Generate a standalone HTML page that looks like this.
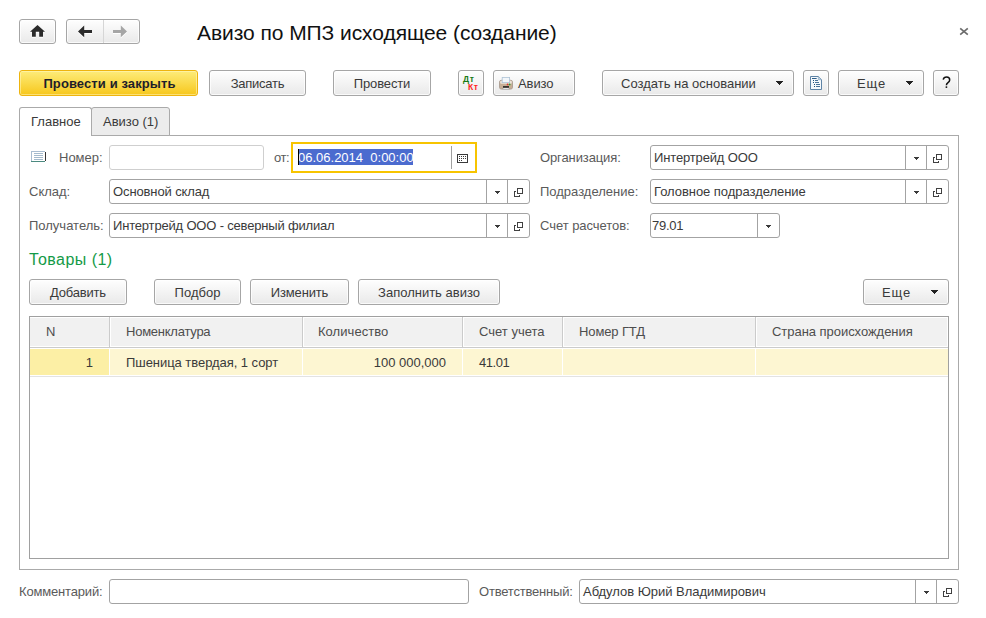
<!DOCTYPE html>
<html><head><meta charset="utf-8">
<style>
*{box-sizing:border-box;margin:0;padding:0}
html,body{width:986px;height:618px;overflow:hidden;background:#fff}
body{position:relative;font-family:"Liberation Sans",sans-serif;font-size:13px;color:#333}
.a{position:absolute;white-space:nowrap}
.btn{position:absolute;border:1px solid #a6a6a6;border-radius:3px;background:linear-gradient(#fefefe,#e9e9e9);box-shadow:inset 0 0 0 1px rgba(255,255,255,0.75)}
.t{position:absolute;white-space:pre;line-height:15px;color:#3a3a3a}
.lbl{position:absolute;white-space:pre;line-height:15px;color:#5a5a5a}
.inp{position:absolute;height:25px;border:1px solid #a3a3a3;border-radius:3px;background:#fff}
.sep{position:absolute;top:0;bottom:0;width:1px;background:#a3a3a3}
.col{position:absolute;top:0;width:1px}
</style></head><body>
<div class="btn" style="left:19px;top:19px;width:37px;height:25px;"></div>
<svg class="a" style="left:30px;top:24px;filter:drop-shadow(0 1px 0 #fff)" width="16" height="14" viewBox="0 0 16 14"><path d="M7.5 1 L15 7.7 H13 V12.7 H9.2 V7.7 H5.8 V12.7 H2 V7.7 H0 Z" fill="#2b2b2b"/></svg>
<div class="btn" style="left:66px;top:19px;width:74px;height:25px;"></div>
<div class="a" style="left:103px;top:20px;width:1px;height:23px;background:#d6d6d6"></div>
<svg class="a" style="left:78px;top:25px;filter:drop-shadow(0 1px 0 #fff)" width="15" height="13" viewBox="0 0 15 13"><path d="M0 6.4 L6.2 0.6 V4.9 H14 V7.9 H6.2 V12.2 Z" fill="#2b2b2b"/></svg>
<svg class="a" style="left:113px;top:25px;filter:drop-shadow(0 1px 0 #fff)" width="15" height="13" viewBox="0 0 15 13"><path d="M14 6.4 L7.8 0.6 V4.9 H0 V7.9 H7.8 V12.2 Z" fill="#a6a6a6"/></svg>
<div class="a" style="left:197px;top:21px;letter-spacing:-0.06px;font-size:21px;line-height:24px;color:#111">Авизо по МПЗ исходящее (создание)</div>
<svg class="a" style="left:959px;top:27px" width="10" height="9" viewBox="0 0 10 9"><path d="M1.2 1.4 L8.8 7.6 M8.8 1.4 L1.2 7.6" stroke="#6b6b6b" stroke-width="1.7"/></svg>
<div class="btn" style="left:19px;top:70px;width:179px;height:26px;background:linear-gradient(#fdec7a,#f7c71c);border-color:#eeb40e;box-shadow:inset 0 0 0 1px rgba(255,250,200,0.5)"></div>
<div class="t" style="left:20px;top:76px;width:179px;text-align:center;letter-spacing:0.1px;font-weight:bold;color:#1e1e2a">Провести и закрыть</div>
<div class="btn" style="left:209px;top:70px;width:97px;height:26px;"></div>
<div class="t" style="left:209px;top:76px;width:97px;text-align:center;letter-spacing:-0.24px;">Записать</div>
<div class="btn" style="left:333px;top:70px;width:98px;height:26px;"></div>
<div class="t" style="left:333px;top:76px;width:98px;text-align:center;letter-spacing:-0.13px;">Провести</div>
<div class="btn" style="left:458px;top:70px;width:26px;height:26px;"></div>
<div class="a" style="left:463px;top:75px;font-size:8.5px;line-height:9px;font-weight:bold;letter-spacing:0.6px;color:#177a12">Дт</div>
<div class="a" style="left:468px;top:83px;font-size:8.5px;line-height:9px;font-weight:bold;letter-spacing:0.6px;color:#ff2222">Кт</div>
<div class="btn" style="left:493px;top:70px;width:82px;height:26px;"></div>
<svg class="a" style="left:499px;top:77px" width="14" height="13" viewBox="0 0 14 13">
  <rect x="0.5" y="3.3" width="13" height="8.8" rx="1.8" fill="#c6ae96" stroke="#a3968a" stroke-width="0.8"/>
  <rect x="1.2" y="3.8" width="11.6" height="3" rx="1" fill="#ece3da"/>
  <rect x="3.2" y="0.4" width="7.4" height="5.2" fill="#f2f6fa" stroke="#aec3d6" stroke-width="0.8"/>
  <circle cx="8.6" cy="7.4" r="0.9" fill="#e5322c"/>
  <circle cx="10.6" cy="7.4" r="0.9" fill="#2aa02a"/>
  <rect x="4" y="9.2" width="6" height="1.6" fill="#151515"/>
  <rect x="4" y="11" width="6" height="1.4" fill="#fff" stroke="#999" stroke-width="0.5"/>
</svg>
<div class="t" style="left:518px;top:76px;letter-spacing:-0.1px;">Авизо</div>
<div class="btn" style="left:602px;top:70px;width:192px;height:26px;"></div>
<div class="t" style="left:621px;top:76px;">Создать на основании</div>
<svg class="a" style="left:776px;top:81px;filter:drop-shadow(0 0 0.6px #fff)" width="7" height="4" shape-rendering="crispEdges"><path d="M0 0h7v1h-7zM1 1h5v1h-5zM2 2h3v1h-3zM3 3h1v1h-1z" fill="#222"/></svg>
<div class="btn" style="left:803px;top:70px;width:26px;height:26px;"></div>
<svg class="a" style="left:810px;top:76px" width="12" height="14" viewBox="0 0 12 14">
  <path d="M0.5 0.5 H8.3 L11.5 3.7 V13.5 H0.5 Z" fill="#f6f9fc" stroke="#5f84a6"/>
  <path d="M8.3 0.5 V3.7 H11.5 Z" fill="#c5d6e5" stroke="#7f9fbb" stroke-width="0.6"/>
  <path d="M2 2.5 H6.7" stroke="#2f5f8a" stroke-width="1"/>
  <path d="M3 4.5 H4 M3 6.5 H4 M4 8.5 H5 M4 10.5 H5" stroke="#1f4f7a" stroke-width="1"/>
  <path d="M5 4.5 H8 M5 6.5 H9 M6 8.5 H10 M6 10.5 H10" stroke="#4a7399" stroke-width="1"/>
</svg>
<div class="btn" style="left:838px;top:70px;width:86px;height:26px;"></div>
<div class="t" style="left:857px;top:76px;letter-spacing:0.9px;">Еще</div>
<svg class="a" style="left:906px;top:81px;filter:drop-shadow(0 0 0.6px #fff)" width="7" height="4" shape-rendering="crispEdges"><path d="M0 0h7v1h-7zM1 1h5v1h-5zM2 2h3v1h-3zM3 3h1v1h-1z" fill="#222"/></svg>
<div class="btn" style="left:933px;top:70px;width:26px;height:26px;"></div>
<svg class="a" style="left:941px;top:76px" width="11" height="13" viewBox="0 0 11 13"><path d="M2.2 3.7 Q2.8 1.1 5.6 1.1 Q8.7 1.1 8.7 3.9 Q8.7 5.4 7 6.6 Q5.4 7.8 5.4 9.3" fill="none" stroke="#111" stroke-width="1.5"/><circle cx="5.4" cy="11.1" r="0.95" fill="#111"/></svg>
<div class="a" style="left:19px;top:135px;width:940px;height:435px;border:1px solid #aaa"></div>
<div class="a" style="left:91px;top:107px;width:79px;height:29px;border:1px solid #aaa;border-radius:3px 3px 0 0;background:#ececec"></div>
<div class="a" style="left:19px;top:107px;width:73px;height:29px;border:1px solid #aaa;border-bottom:none;border-radius:3px 3px 0 0;background:#fff"></div>
<div class="t" style="left:31px;top:114px;">Главное</div>
<div class="t" style="left:103px;top:114px;">Авизо (1)</div>
<svg class="a" style="left:31px;top:151px" width="15" height="11" shape-rendering="crispEdges">
  <rect x="0" y="0" width="15" height="11" fill="#fff"/>
  <rect x="0" y="0" width="14" height="1" fill="#a9bdd1"/><rect x="0" y="0" width="1" height="10" fill="#a9bdd1"/>
  <rect x="14" y="1" width="1" height="9" fill="#333"/><rect x="0" y="10" width="14" height="1" fill="#4b8a80"/>
  <rect x="3" y="2" width="9" height="1" fill="#a4bacd"/><rect x="3" y="4" width="9" height="1" fill="#a4bacd"/>
  <rect x="3" y="6" width="9" height="1" fill="#a4bacd"/><rect x="3" y="8" width="9" height="1" fill="#a4bacd"/>
</svg>
<div class="lbl" style="left:59px;top:150px;">Номер:</div>
<div class="inp" style="left:109px;top:145px;width:155px;border-color:#cfcfcf"></div>
<div class="lbl" style="left:274px;top:150px;letter-spacing:-0.4px;">от:</div>
<div class="a" style="left:291px;top:142px;width:186px;height:31px;border:2px solid #f7c400;background:#fff"></div>
<div class="a" style="left:298px;top:149px;width:115px;height:16px;background:#4b6bcf"></div>
<div class="t" style="left:298px;top:150px;color:#fff">06.06.2014  0:00:00</div>
<div class="a" style="left:298px;top:149px;width:1px;height:16px;background:#000"></div>
<div class="a" style="left:451px;top:146px;width:1px;height:23px;background:#a0a0a0"></div>
<svg class="a" style="left:457px;top:154px" width="11" height="9" shape-rendering="crispEdges"><path d="M0.5 0.5h10v8h-10z" fill="none" stroke="#3a3a3a"/><path d="M2 2h1v1h-1zM4 2h1v1h-1zM6 2h1v1h-1zM8 2h1v1h-1zM2 4h1v1h-1zM4 4h1v1h-1zM6 4h1v1h-1zM8 4h1v1h-1zM2 6h1v1h-1zM4 6h1v1h-1z" fill="#3a3a3a"/></svg>
<div class="lbl" style="left:540px;top:150px;letter-spacing:-0.11px;">Организация:</div>
<div class="inp" style="left:650px;top:145px;width:299px;border-color:#a3a3a3"><div class="t" style="left:3px;top:4px;letter-spacing:-0.15px;">Интертрейд ООО</div><div class="sep" style="left:254px"></div><div class="sep" style="left:275px"></div><svg class="a" style="left:263px;top:11px" width="5" height="3" shape-rendering="crispEdges"><path d="M0 0h5v1h-5zM1 1h3v1h-3zM2 2h1v1h-1z" fill="#3a3a3a"/></svg><svg class="a" style="left:282px;top:8px" width="10" height="10" shape-rendering="crispEdges"><path d="M3.5 0.5h5v5h-5z" fill="none" stroke="#404040"/><path d="M2 3.5H0.5V8.5H5.5V7" fill="none" stroke="#404040"/></svg></div>
<div class="lbl" style="left:29px;top:184px;">Склад:</div>
<div class="inp" style="left:109px;top:179px;width:421px;border-color:#a3a3a3"><div class="t" style="left:3px;top:4px;letter-spacing:-0.115px;">Основной склад</div><div class="sep" style="left:376px"></div><div class="sep" style="left:397px"></div><svg class="a" style="left:385px;top:11px" width="5" height="3" shape-rendering="crispEdges"><path d="M0 0h5v1h-5zM1 1h3v1h-3zM2 2h1v1h-1z" fill="#3a3a3a"/></svg><svg class="a" style="left:404px;top:8px" width="10" height="10" shape-rendering="crispEdges"><path d="M3.5 0.5h5v5h-5z" fill="none" stroke="#404040"/><path d="M2 3.5H0.5V8.5H5.5V7" fill="none" stroke="#404040"/></svg></div>
<div class="lbl" style="left:540px;top:184px;">Подразделение:</div>
<div class="inp" style="left:650px;top:179px;width:299px;border-color:#a3a3a3"><div class="t" style="left:3px;top:4px;letter-spacing:-0.04px;">Головное подразделение</div><div class="sep" style="left:254px"></div><div class="sep" style="left:275px"></div><svg class="a" style="left:263px;top:11px" width="5" height="3" shape-rendering="crispEdges"><path d="M0 0h5v1h-5zM1 1h3v1h-3zM2 2h1v1h-1z" fill="#3a3a3a"/></svg><svg class="a" style="left:282px;top:8px" width="10" height="10" shape-rendering="crispEdges"><path d="M3.5 0.5h5v5h-5z" fill="none" stroke="#404040"/><path d="M2 3.5H0.5V8.5H5.5V7" fill="none" stroke="#404040"/></svg></div>
<div class="lbl" style="left:29px;top:218px;">Получатель:</div>
<div class="inp" style="left:109px;top:213px;width:421px;border-color:#a3a3a3"><div class="t" style="left:3px;top:4px;letter-spacing:-0.18px;">Интертрейд ООО - северный филиал</div><div class="sep" style="left:376px"></div><div class="sep" style="left:397px"></div><svg class="a" style="left:385px;top:11px" width="5" height="3" shape-rendering="crispEdges"><path d="M0 0h5v1h-5zM1 1h3v1h-3zM2 2h1v1h-1z" fill="#3a3a3a"/></svg><svg class="a" style="left:404px;top:8px" width="10" height="10" shape-rendering="crispEdges"><path d="M3.5 0.5h5v5h-5z" fill="none" stroke="#404040"/><path d="M2 3.5H0.5V8.5H5.5V7" fill="none" stroke="#404040"/></svg></div>
<div class="lbl" style="left:540px;top:218px;letter-spacing:-0.05px;">Счет расчетов:</div>
<div class="inp" style="left:650px;top:213px;width:130px;border-color:#a3a3a3"><div class="t" style="left:1px;top:4px;letter-spacing:-0.27px;">79.01</div><div class="sep" style="left:106px"></div><svg class="a" style="left:115px;top:11px" width="5" height="3" shape-rendering="crispEdges"><path d="M0 0h5v1h-5zM1 1h3v1h-3zM2 2h1v1h-1z" fill="#3a3a3a"/></svg></div>
<div class="a" style="left:29px;top:251px;font-size:16px;line-height:18px;letter-spacing:0.45px;color:#139a47">Товары (1)</div>
<div class="btn" style="left:29px;top:279px;width:98px;height:26px;"></div>
<div class="t" style="left:29px;top:285px;width:98px;text-align:center;letter-spacing:-0.2px;">Добавить</div>
<div class="btn" style="left:154px;top:279px;width:87px;height:26px;"></div>
<div class="t" style="left:154px;top:285px;width:87px;text-align:center;">Подбор</div>
<div class="btn" style="left:250px;top:279px;width:99px;height:26px;"></div>
<div class="t" style="left:250px;top:285px;width:99px;text-align:center;letter-spacing:-0.16px;">Изменить</div>
<div class="btn" style="left:358px;top:279px;width:142px;height:26px;"></div>
<div class="t" style="left:358px;top:285px;width:142px;text-align:center;">Заполнить авизо</div>
<div class="btn" style="left:863px;top:279px;width:86px;height:26px;"></div>
<div class="t" style="left:882px;top:285px;letter-spacing:0.9px;">Еще</div>
<svg class="a" style="left:931px;top:290px;filter:drop-shadow(0 0 0.6px #fff)" width="7" height="4" shape-rendering="crispEdges"><path d="M0 0h7v1h-7zM1 1h5v1h-5zM2 2h3v1h-3zM3 3h1v1h-1z" fill="#222"/></svg>
<div class="a" style="left:29px;top:316px;width:920px;height:243px;border:1px solid #a0a0a0;background:#fff">
<div class="a" style="left:0;top:1px;width:917px;height:28px;background:#f1f1f1"></div>
<div class="a" style="left:0;top:30px;width:918px;height:1px;background:#cbcbcb"></div>
<div class="a" style="left:0;top:32px;width:79px;height:26px;background:#fcefa5"></div>
<div class="a" style="left:80px;top:32px;width:838px;height:26px;background:#fdf6d2"></div>
<div class="a" style="left:0;top:59px;width:918px;height:1px;background:#e3e3e3"></div>
<div class="col" style="left:79px;height:30px;background:#cbcbcb"></div>
<div class="col" style="left:80px;top:1px;height:28px;background:#fff"></div>
<div class="col" style="left:79px;top:32px;height:26px;background:#fff"></div>
<div class="col" style="left:272px;height:30px;background:#cbcbcb"></div>
<div class="col" style="left:273px;top:1px;height:28px;background:#fff"></div>
<div class="col" style="left:272px;top:32px;height:26px;background:#fff"></div>
<div class="col" style="left:432px;height:30px;background:#cbcbcb"></div>
<div class="col" style="left:433px;top:1px;height:28px;background:#fff"></div>
<div class="col" style="left:432px;top:32px;height:26px;background:#fff"></div>
<div class="col" style="left:532px;height:30px;background:#cbcbcb"></div>
<div class="col" style="left:533px;top:1px;height:28px;background:#fff"></div>
<div class="col" style="left:532px;top:32px;height:26px;background:#fff"></div>
<div class="col" style="left:725px;height:30px;background:#cbcbcb"></div>
<div class="col" style="left:726px;top:1px;height:28px;background:#fff"></div>
<div class="col" style="left:725px;top:32px;height:26px;background:#fff"></div>
<div class="t" style="left:16px;top:7px;color:#4d4d4d">N</div>
<div class="t" style="left:96px;top:7px;letter-spacing:-0.24px;color:#4d4d4d">Номенклатура</div>
<div class="t" style="left:288px;top:7px;letter-spacing:0.05px;color:#4d4d4d">Количество</div>
<div class="t" style="left:449px;top:7px;color:#4d4d4d">Счет учета</div>
<div class="t" style="left:549px;top:7px;letter-spacing:-0.12px;color:#4d4d4d">Номер ГТД</div>
<div class="t" style="left:742px;top:7px;letter-spacing:-0.04px;color:#4d4d4d">Страна происхождения</div>
<div class="t" style="left:0;top:38px;width:63px;text-align:right">1</div>
<div class="t" style="left:96px;top:38px;letter-spacing:-0.05px">Пшеница твердая, 1 сорт</div>
<div class="t" style="left:271px;top:38px;width:145px;text-align:right">100 000,000</div>
<div class="t" style="left:449px;top:38px;letter-spacing:-0.45px">41.01</div>
</div>
<div class="lbl" style="left:19px;top:584px;letter-spacing:-0.17px;">Комментарий:</div>
<div class="inp" style="left:109px;top:579px;width:360px;border-color:#a3a3a3"></div>
<div class="lbl" style="left:479px;top:584px;letter-spacing:-0.2px;">Ответственный:</div>
<div class="inp" style="left:579px;top:579px;width:380px;border-color:#a3a3a3"><div class="t" style="left:3px;top:4px;letter-spacing:-0.02px;">Абдулов Юрий Владимирович</div><div class="sep" style="left:335px"></div><div class="sep" style="left:356px"></div><svg class="a" style="left:344px;top:11px" width="5" height="3" shape-rendering="crispEdges"><path d="M0 0h5v1h-5zM1 1h3v1h-3zM2 2h1v1h-1z" fill="#3a3a3a"/></svg><svg class="a" style="left:363px;top:8px" width="10" height="10" shape-rendering="crispEdges"><path d="M3.5 0.5h5v5h-5z" fill="none" stroke="#404040"/><path d="M2 3.5H0.5V8.5H5.5V7" fill="none" stroke="#404040"/></svg></div>
</body></html>
